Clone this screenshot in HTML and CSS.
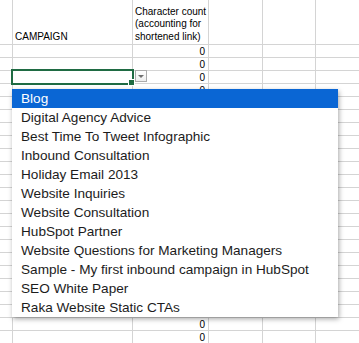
FILE: index.html
```html
<!DOCTYPE html>
<html lang="en">
<head>
    <meta charset="UTF-8">
    <title>Campaign sheet</title>
    <link rel="stylesheet" href="styles.css">
</head>
<body>
    <div class="sheet" id="sheet">
        <div class="cell"></div>
        <div class="cell head">CAMPAIGN</div>
        <div class="cell head">Character count (accounting for shortened link)</div>
        <div class="cell"></div>
        <div class="cell"></div>
        <div class="cell"></div>
    </div>

    <ul class="dropdown">
        <li class="active">Blog</li>
        <li>Digital Agency Advice</li>
        <li>Best Time To Tweet Infographic</li>
        <li>Inbound Consultation</li>
        <li>Holiday Email 2013</li>
        <li>Website Inquiries</li>
        <li>Website Consultation</li>
        <li>HubSpot Partner</li>
        <li>Website Questions for Marketing Managers</li>
        <li>Sample - My first inbound campaign in HubSpot</li>
        <li>SEO White Paper</li>
        <li>Raka Website Static CTAs</li>
    </ul>

    <script>
        // Body rows: six columns, count column always shows 0
        const sheet = document.getElementById('sheet');
        for (let r = 1; r <= 23; r++) {
            for (let c = 0; c < 6; c++) {
                const cell = document.createElement('div');
                cell.className = 'cell';
                if (c === 2) {
                    cell.className += ' num';
                    cell.textContent = '0';
                }
                if (r === 3 && c === 1) {
                    cell.innerHTML = '<span class="selection"><span class="handle"></span></span>';
                }
                if (r === 3 && c === 2) {
                    cell.innerHTML = '0<span class="pick"></span>';
                }
                sheet.appendChild(cell);
            }
        }
    </script>
</body>
</html>
```

FILE: styles.css
```css
/* Base */
body {
    margin: 0;
    width: 359px;
    height: 343px;
    overflow: hidden;
    background: #fff;
    font-family: 'Liberation Sans', Arial, sans-serif;
    position: relative;
}

/* Grid */
.sheet {
    display: grid;
    grid-template-columns: 12px 119px 75px 53px 52px 43px;
    grid-template-rows: 44px;
    grid-auto-rows: 12px;
    gap: 1px;
    background: #d4d4d4;
}

.cell {
    background: #fff;
    position: relative;
    font-size: 10px;
    color: #000;
    line-height: 12px;
}

.head {
    display: flex;
    align-items: flex-end;
    padding: 0 0 1px 2px;
    line-height: 12.5px;
}

.num {
    text-align: right;
    padding-right: 3px;
    line-height: 13px;
}

/* Selected cell */
.selection {
    position: absolute;
    z-index: 2;
    left: -2px;
    top: -2px;
    right: -2px;
    bottom: -2px;
    border: 2px solid #1f6b43;
}

.handle {
    position: absolute;
    right: -3px;
    bottom: -3px;
    width: 5px;
    height: 5px;
    background: #1f6b43;
    border: 1px solid #fff;
}

.pick {
    position: absolute;
    z-index: 2;
    left: 2px;
    top: -1px;
    width: 10px;
    height: 10px;
    border: 1px solid #ababab;
    background: linear-gradient(#fff, #eee);
}

.pick::after {
    content: '';
    position: absolute;
    left: 2px;
    top: 4px;
    border-left: 3px solid transparent;
    border-right: 3px solid transparent;
    border-top: 3px solid #707070;
}

/* Dropdown list */
.dropdown {
    position: absolute;
    z-index: 5;
    left: 12px;
    top: 89px;
    width: 326px;
    margin: 0;
    padding: 0;
    list-style: none;
    background: #fff;
    box-shadow: 1px 2px 5px rgba(0, 0, 0, 0.35);
}

.dropdown li {
    height: 19px;
    line-height: 19px;
    padding-left: 9px;
    font-size: 13.6px;
    color: #1c1c1c;
    white-space: nowrap;
}

.dropdown li.active {
    background: #0a66d4;
    color: #fff;
}
```
